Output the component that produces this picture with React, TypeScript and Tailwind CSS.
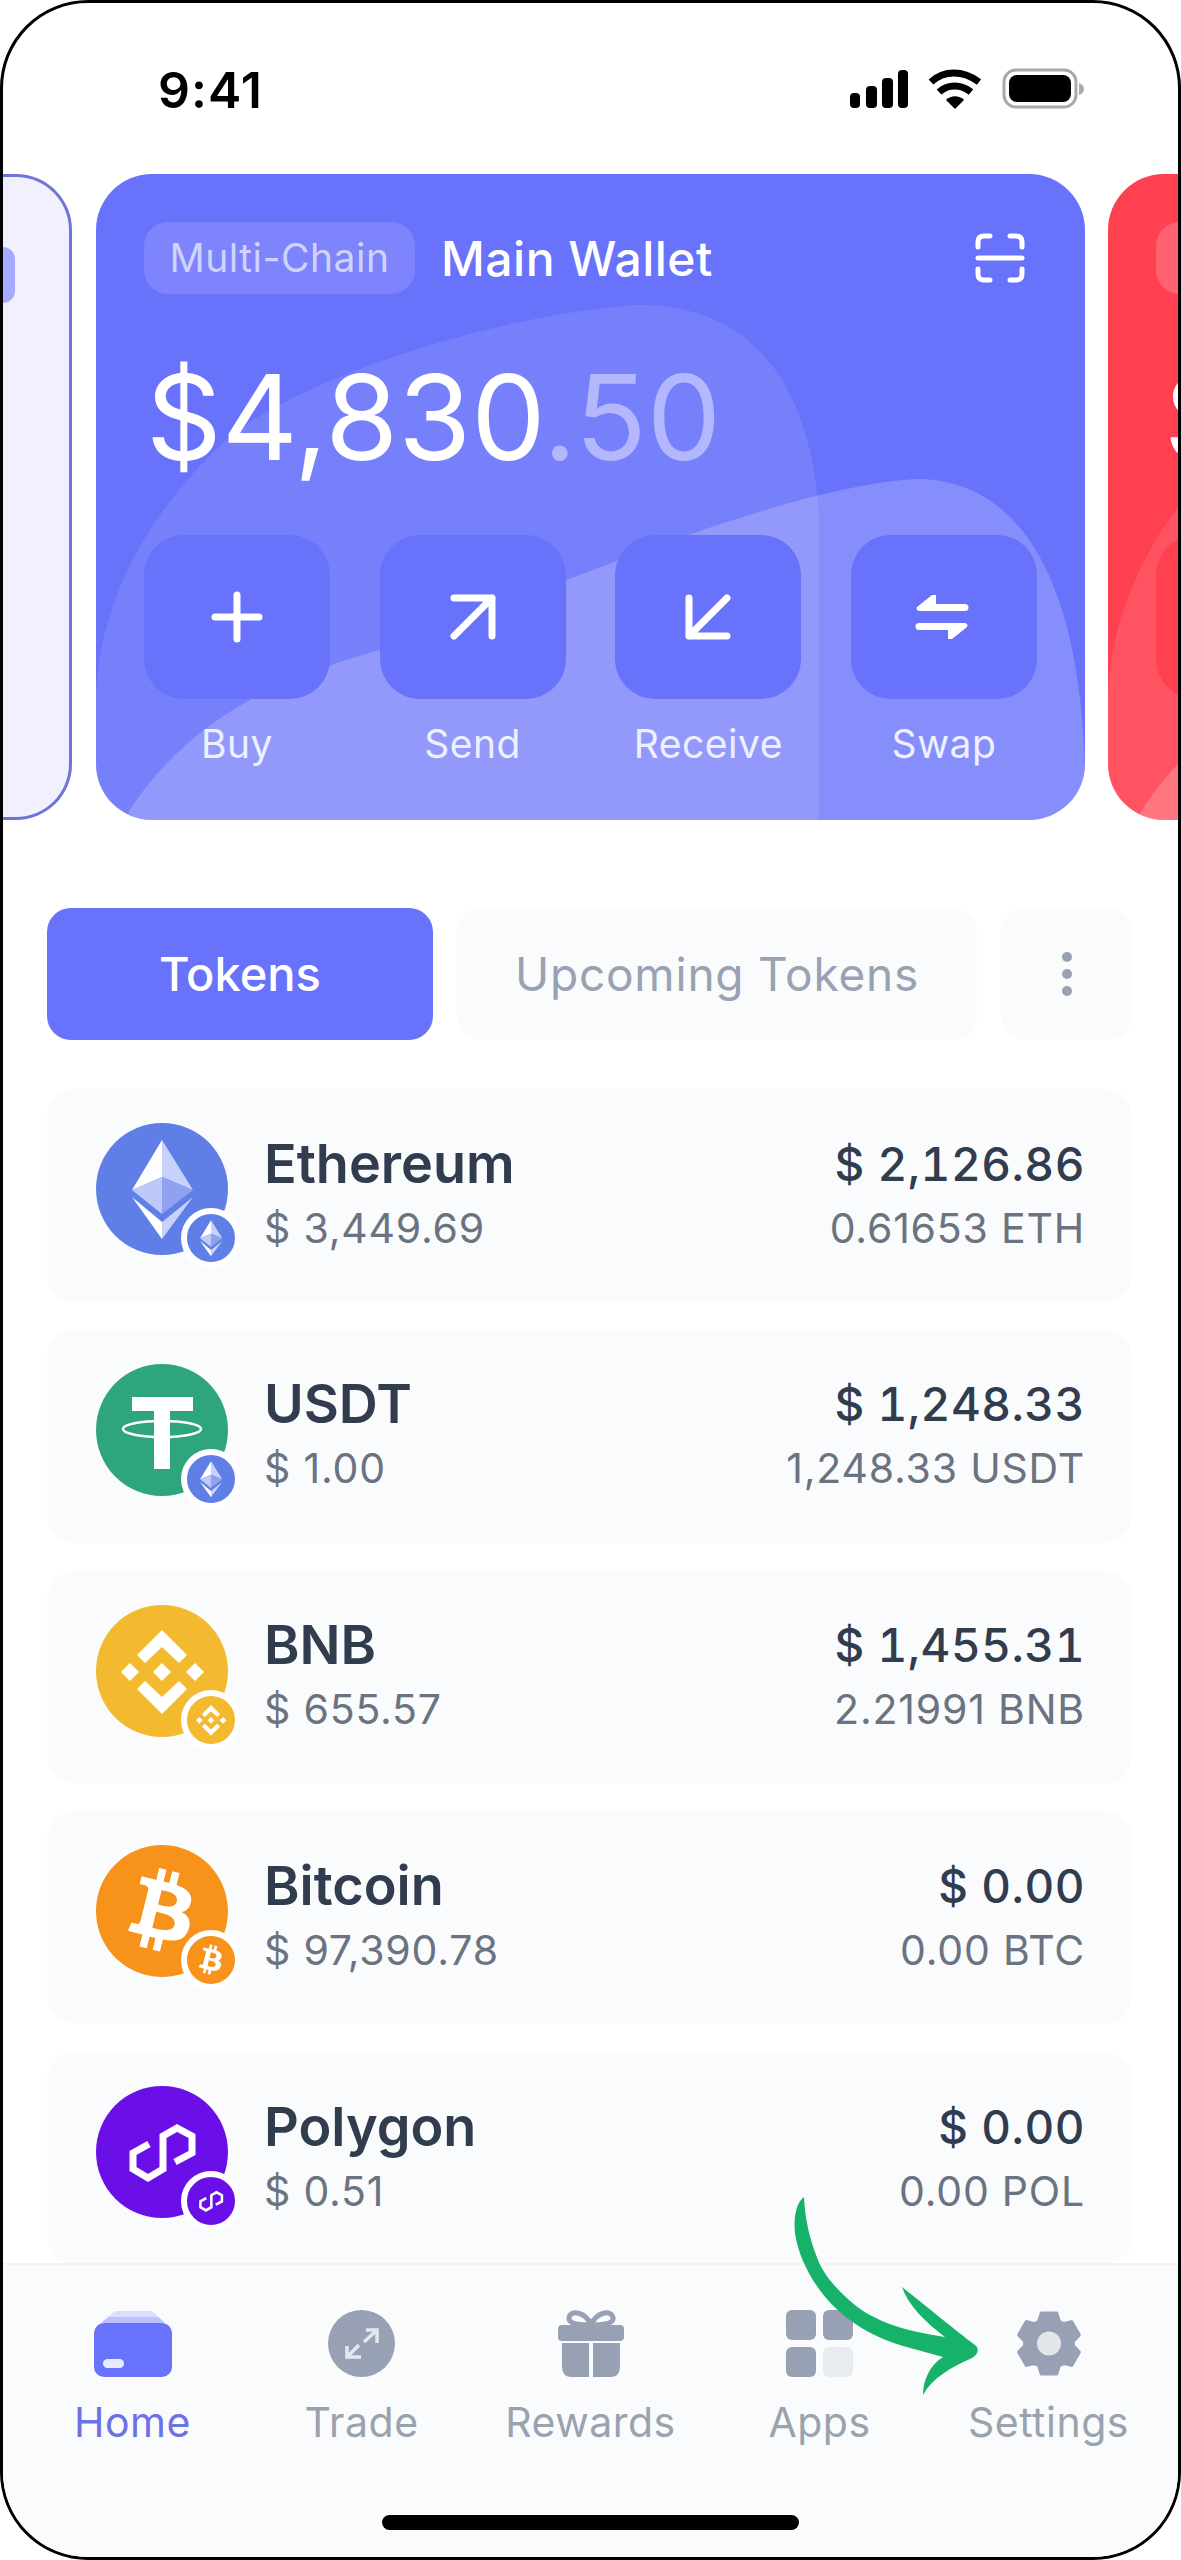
import React from 'react';
import { SiBitcoin } from 'react-icons/si';

const Blobs = () => (
  <svg viewBox="0 0 989 646" className="absolute inset-0 w-[989px] h-[646px]">
    <path d="M0 646 V520 C3 440 40 350 130 266 C200 205 400 140 541 131 C640 130 715 190 723 346 V646 Z" fill="#fff" fillOpacity="0.1" />
    <path d="M28 646 C60 590 110 550 154 526 C190 505 250 485 284 476 L470 406 C560 372 720 310 821 305 C920 305 985 400 989 600 V646 Z" fill="#fff" fillOpacity="0.2" />
  </svg>
);

const StatusBar = () => (
  <div className="h-[171px] flex items-start pt-[62px] pl-[155px] pr-[94px] justify-between">
    <span className="text-[50px] leading-[50px] font-semibold text-black tracking-[1px]">9:41</span>
    <svg width="235" height="42" viewBox="0 0 235 42" className="mt-[3px]">
      <rect x="1" y="25" width="10" height="15" rx="4" fill="#000" />
      <rect x="17" y="18" width="11" height="22" rx="4" fill="#000" />
      <rect x="33" y="10" width="11" height="30" rx="4" fill="#000" />
      <rect x="49" y="2" width="10" height="38" rx="4" fill="#000" />
      <path d="M82 14 C95 2 114 2 130 14" stroke="#000" strokeWidth="7" fill="none" />
      <path d="M90 24 C99 16 112 16 122 24" stroke="#000" strokeWidth="7" fill="none" />
      <path d="M97 32 C102 27 110 27 115 32 L106 41 Z" fill="#000" />
      <rect x="155" y="2" width="72" height="37" rx="12" fill="none" stroke="#aaaaaa" strokeWidth="3" />
      <rect x="160" y="7" width="62" height="27" rx="8" fill="#000" />
      <path d="M230 15 C233 16 235 18 235 21 C235 24 233 26 230 27 Z" fill="#aaaaaa" />
    </svg>
  </div>
);

const ActionIcon = ({ name }: { name: string }) => {
  if (name === 'Buy') {
    return (
      <svg width="66" height="66" viewBox="0 0 66 66" fill="none" stroke="#fff" strokeWidth="7" strokeLinecap="round">
        <path d="M33 11 V55 M11 33 H55" />
      </svg>
    );
  }
  if (name === 'Send') {
    return (
      <svg width="66" height="66" viewBox="0 0 66 66" fill="none" stroke="#fff" strokeWidth="7" strokeLinecap="round" strokeLinejoin="round">
        <path d="M14 52 L52 14 M14 14 H52 V52" />
      </svg>
    );
  }
  if (name === 'Receive') {
    return (
      <svg width="66" height="66" viewBox="0 0 66 66" fill="none" stroke="#fff" strokeWidth="7" strokeLinecap="round" strokeLinejoin="round">
        <path d="M52 14 L14 52 M14 14 V52 H52" />
      </svg>
    );
  }
  return (
    <svg width="66" height="66" viewBox="0 0 66 66">
      <path d="M6 23 L21 11 H25 V20 H54 a3.5 3.5 0 0 1 0 7 H9 C6 27 5 25 6 23 Z" fill="#fff" />
      <path d="M56 43 L41 55 H37 V46 H8 a3.5 3.5 0 0 1 0 -7 H53 C56 39 57 41 56 43 Z" fill="#fff" />
    </svg>
  );
};

const WalletCard = () => (
  <div className="relative w-[989px] h-[646px] shrink-0 rounded-[56px] overflow-hidden bg-[#6872fb]">
    <Blobs />
    <div className="relative pt-[48px] px-[48px]">
      <div className="flex items-center h-[72px]">
        <div className="w-[271px] h-[72px] rounded-[24px] bg-[#7d84fc] flex items-center justify-center text-[39px] text-[#cfd3fe] tracking-[0.5px]">
          Multi-Chain
        </div>
        <span className="ml-[26px] mt-[2px] text-[48px] font-medium text-white tracking-[0.5px]">Main Wallet</span>
        <svg width="50" height="50" viewBox="0 0 50 50" fill="none" stroke="#fff" strokeWidth="5" strokeLinecap="round" className="ml-auto mr-[12px]">
          <path d="M3 14 V9 Q3 3 9 3 H15 M35 3 H41 Q47 3 47 9 V14 M3 25 H47 M3 36 V41 Q3 47 9 47 H15 M35 47 H41 Q47 47 47 41 V36" />
        </svg>
      </div>
      <div className="mt-[58px] ml-[2px] h-[130px] text-[118px] leading-[130px] text-white">
        $4,830<span className="text-[#b3b8fe]">.50</span>
      </div>
      <div className="mt-[53px] flex justify-between">
        {['Buy', 'Send', 'Receive', 'Swap'].map((label) => (
          <div key={label} className="w-[186px] flex flex-col items-center">
            <div className="w-[186px] h-[164px] rounded-[40px] bg-[#6872fb] flex items-center justify-center">
              <ActionIcon name={label} />
            </div>
            <span className="mt-[21px] text-[39px] leading-[48px] text-[#eef0ff] tracking-[0.5px]">{label}</span>
          </div>
        ))}
      </div>
    </div>
  </div>
);

const PeekRedCard = () => (
  <div className="relative w-[989px] h-[646px] shrink-0 rounded-[56px] overflow-hidden bg-[#ff4050]">
    <Blobs />
    <div className="relative pt-[48px] px-[48px]">
      <div className="w-[271px] h-[72px] rounded-[24px] bg-[#ff6270]" />
      <div className="mt-[58px] ml-[8px] h-[130px] text-[118px] leading-[130px] text-white">$</div>
      <div className="mt-[53px] w-[186px] h-[164px] rounded-[40px] bg-[#ff4050]" />
    </div>
  </div>
);

const EthMark = () => (
  <svg viewBox="0 0 132 132" className="w-full h-full">
    <polygon points="66,17 36,67 66,54" fill="#ffffff" />
    <polygon points="66,17 97,67 66,54" fill="#c7d1fa" />
    <polygon points="36,67 66,54 66,91" fill="#bfc9f7" />
    <polygon points="97,67 66,54 66,91" fill="#8ea2ef" />
    <polygon points="36,74 66,99 66,116" fill="#ffffff" />
    <polygon points="97,74 66,99 66,116" fill="#c7d1fa" />
  </svg>
);

const TetherMark = () => (
  <svg viewBox="0 0 132 132" className="w-full h-full">
    <rect x="36" y="33" width="61" height="14" fill="#fff" />
    <rect x="58" y="33" width="16" height="72" fill="#fff" />
    <ellipse cx="66" cy="65" rx="39" ry="8" fill="none" stroke="#fff" strokeWidth="2.5" />
  </svg>
);

const BnbMark = () => (
  <svg viewBox="0 0 132 132" className="w-full h-full" fill="#fff">
    <polygon points="66,58 75,67 66,76 57,67" />
    <polygon points="34,58 43,67 34,76 25,67" />
    <polygon points="99,58 108,67 99,76 90,67" />
    <polygon points="66,25 91,50 83,58 66,42 49,58 41,50" />
    <polygon points="66,109 91,84 83,76 66,92 49,76 41,84" />
  </svg>
);

const PolygonMark = () => (
  <svg viewBox="0 0 132 132" className="w-full h-full" fill="none" stroke="#fff" strokeWidth="7">
    <path d="M53 58 L37 67 V83 L52 92 L67 83 V50 L81 42 L96 50 V67 L79 76" />
  </svg>
);

// the simple-icons glyph has the B cut out, so the white coin behind it shows through
const BtcMark = () => <SiBitcoin className="w-full h-full block" color="#f7931a" />;

const tokens = [
  { name: 'Ethereum', price: '$ 3,449.69', value: '$ 2,126.86', amount: '0.61653 ETH', coin: 'bg-[#5f7fe6]', badge: 'bg-[#5f7fe6]', mark: <EthMark />, small: <EthMark /> },
  { name: 'USDT', price: '$ 1.00', value: '$ 1,248.33', amount: '1,248.33 USDT', coin: 'bg-[#2fa57c]', badge: 'bg-[#5f7fe6]', mark: <TetherMark />, small: <EthMark /> },
  { name: 'BNB', price: '$ 655.57', value: '$ 1,455.31', amount: '2.21991 BNB', coin: 'bg-[#f3ba2f]', badge: 'bg-[#f3ba2f]', mark: <BnbMark />, small: <BnbMark /> },
  { name: 'Bitcoin', price: '$ 97,390.78', value: '$ 0.00', amount: '0.00 BTC', coin: 'bg-white', badge: 'bg-white', mark: <BtcMark />, small: <BtcMark /> },
  { name: 'Polygon', price: '$ 0.51', value: '$ 0.00', amount: '0.00 POL', coin: 'bg-[#6a0fe8]', badge: 'bg-[#6a0fe8]', mark: <PolygonMark />, small: <PolygonMark /> },
];

const gearPath = (() => {
  const outer = 31;
  const root = 24;
  let d = '';
  for (let i = 0; i < 6; i++) {
    const a = (i * Math.PI) / 3 - Math.PI / 2;
    const pts = [
      [root, a - 0.42],
      [outer, a - 0.24],
      [outer, a + 0.24],
      [root, a + 0.42],
    ];
    pts.forEach(([r, t]) => {
      d += `${d ? 'L' : 'M'}${(33 + r * Math.cos(t)).toFixed(1)} ${(33.5 + r * Math.sin(t)).toFixed(1)} `;
    });
  }
  return d + 'Z';
})();

const navItems = [
  {
    label: 'Home',
    icon: (
      <svg width="78" height="67" viewBox="0 0 78 67">
        <polygon points="21,1 58,1 71,13 7,13" fill="#dcdeff" />
        <polygon points="14,7 64,7 71,13 7,13" fill="#bcc0ff" />
        <rect x="0" y="13" width="78" height="54" rx="10" fill="#6872fb" />
        <rect x="9" y="49" width="21" height="9" rx="4.5" fill="#e6ebff" />
      </svg>
    ),
  },
  {
    label: 'Trade',
    icon: (
      <svg width="67" height="67" viewBox="0 0 67 67" fill="none">
        <circle cx="33.5" cy="33.5" r="33.5" fill="#98a1b3" />
        <path d="M38 20 H49 V33 M49 20 L36 32 M19 36 V47 H33 M19 47 L31 35" stroke="#e3e8ef" strokeWidth="3.5" />
      </svg>
    ),
  },
  {
    label: 'Rewards',
    icon: (
      <svg width="66" height="67" viewBox="0 0 66 67">
        <path d="M33 15 C28 2 12 -1 11 8 C10 14 22 15 33 15 C38 2 54 -1 55 8 C56 14 44 15 33 15" fill="none" stroke="#98a1b3" strokeWidth="5" />
        <rect x="0" y="15" width="66" height="16" rx="4" fill="#98a1b3" />
        <path d="M4 33 H31 V67 H14 Q4 67 4 57 Z" fill="#98a1b3" />
        <path d="M35 33 H62 V57 Q62 67 52 67 H35 Z" fill="#98a1b3" />
      </svg>
    ),
  },
  {
    label: 'Apps',
    icon: (
      <div className="grid grid-cols-[30px_30px] grid-rows-[30px_30px] gap-[7px]">
        <div className="rounded-[6px] bg-[#98a1b3]" />
        <div className="rounded-[6px] bg-[#98a1b3]" />
        <div className="rounded-[6px] bg-[#98a1b3]" />
        <div className="rounded-[6px] bg-[#e9ecef]" />
      </div>
    ),
  },
  {
    label: 'Settings',
    icon: (
      <svg width="66" height="67" viewBox="0 0 66 67">
        <path d={gearPath} fill="#98a1b3" stroke="#98a1b3" strokeWidth="4" strokeLinejoin="round" />
        <circle cx="33" cy="33.5" r="12" fill="#e4e7ea" />
      </svg>
    ),
  },
];

const App = () => {
  return (
    <div className="relative w-[1181px] h-[2560px] bg-white">
      <div className="w-full h-full border-[3px] border-black rounded-[88px] overflow-hidden flex flex-col bg-white font-[Inter,sans-serif]">
        <StatusBar />

        <div className="flex h-[646px] shrink-0">
          <div className="w-[69px] h-[646px] shrink-0 rounded-r-[56px] border-[3px] border-l-0 border-[#6f74d8] bg-[#f0f1fd] mr-[24px]">
            <div className="mt-[70px] w-[12px] h-[56px] rounded-r-[12px] bg-[#a5aaff]" />
          </div>
          <WalletCard />
          <div className="ml-[23px]">
            <PeekRedCard />
          </div>
        </div>

        <div className="flex gap-[24px] mt-[88px] ml-[44px] h-[132px] shrink-0">
          <div className="w-[386px] rounded-[24px] bg-[#6872fb] flex items-center justify-center text-[47px] font-medium text-white">Tokens</div>
          <div className="w-[520px] rounded-[24px] bg-[#f9fbfc] flex items-center justify-center text-[46px] text-[#98a2b3] tracking-[0.8px]">Upcoming Tokens</div>
          <div className="w-[131px] rounded-[24px] bg-[#f9fbfc] flex flex-col items-center justify-center gap-[7px]">
            <div className="w-[10px] h-[10px] rounded-full bg-[#98a2b3]" />
            <div className="w-[10px] h-[10px] rounded-full bg-[#98a2b3]" />
            <div className="w-[10px] h-[10px] rounded-full bg-[#98a2b3]" />
          </div>
        </div>

        <div className="flex-1 min-h-0 overflow-hidden mt-[49px] ml-[44px] mr-[46px] flex flex-col gap-[27.75px]">
          {tokens.map((t) => (
            <div key={t.name} className="h-[213px] shrink-0 rounded-[28px] bg-[#f9fbfc] flex items-center pl-[49px] pr-[47px]">
              <div className={`relative self-start mt-[34px] w-[132px] h-[132px] rounded-full shrink-0 ${t.coin}`}>
                {t.mark}
                <div className={`absolute left-[85px] top-[85px] w-[60px] h-[60px] rounded-full border-[6px] border-white ${t.badge}`}>
                  {t.small}
                </div>
              </div>
              <div className="ml-[36px] flex flex-col">
                <span className="text-[54px] leading-[64px] font-semibold text-[#323c4f]">{t.name}</span>
                <span className="text-[41px] leading-[64px] text-[#6b7280] tracking-[0.8px]">{t.price}</span>
              </div>
              <div className="ml-auto flex flex-col items-end">
                <span className="text-[46px] leading-[64px] font-medium text-[#323c4f] tracking-[0.5px] tabular-nums">{t.value}</span>
                <span className="text-[41px] leading-[64px] text-[#6b7280] tracking-[0.8px]">{t.amount}</span>
              </div>
            </div>
          ))}
        </div>

        <div className="h-[294px] shrink-0 bg-[#f9fbfc] border-t-[2px] border-[#f2f4f6] pt-[45px] flex flex-col">
          <div className="grid grid-cols-[repeat(5,229px)] ml-[15px]">
            {navItems.map((item) => (
              <div key={item.label} className="flex flex-col items-center">
                <div className="h-[67px] flex items-center justify-center">{item.icon}</div>
                <span className={`mt-[21px] text-[41px] leading-[48px] tracking-[0.5px] ${item.label === 'Home' ? 'text-[#6a72e6]' : 'text-[#9aa2af]'}`}>
                  {item.label}
                </span>
              </div>
            ))}
          </div>
          <div className="mt-[69px] ml-[379px] w-[417px] h-[15px] rounded-full bg-black" />
        </div>
      </div>

      {/* hand-drawn annotation arrow on top of the screenshot */}
      <svg width="1181" height="2560" viewBox="0 0 1181 2560" className="absolute inset-0 pointer-events-none">
        <path
          d="M804 2197 C793 2205 793 2230 797 2243 C803 2268 820 2295 841 2313 C860 2329 880 2339 903 2346 L943 2357 C930 2365 923 2380 923 2395 C932 2378 950 2368 972 2358 C979 2354 979 2348 975 2345 C955 2330 925 2305 902 2287 C908 2305 925 2322 945 2337 C925 2334 905 2330 887 2323 C870 2316 860 2310 849 2300 C830 2283 822 2270 818 2260 C810 2240 805 2220 804 2197 Z"
          fill="#17b26a"
        />
      </svg>
    </div>
  );
};

export default App;
